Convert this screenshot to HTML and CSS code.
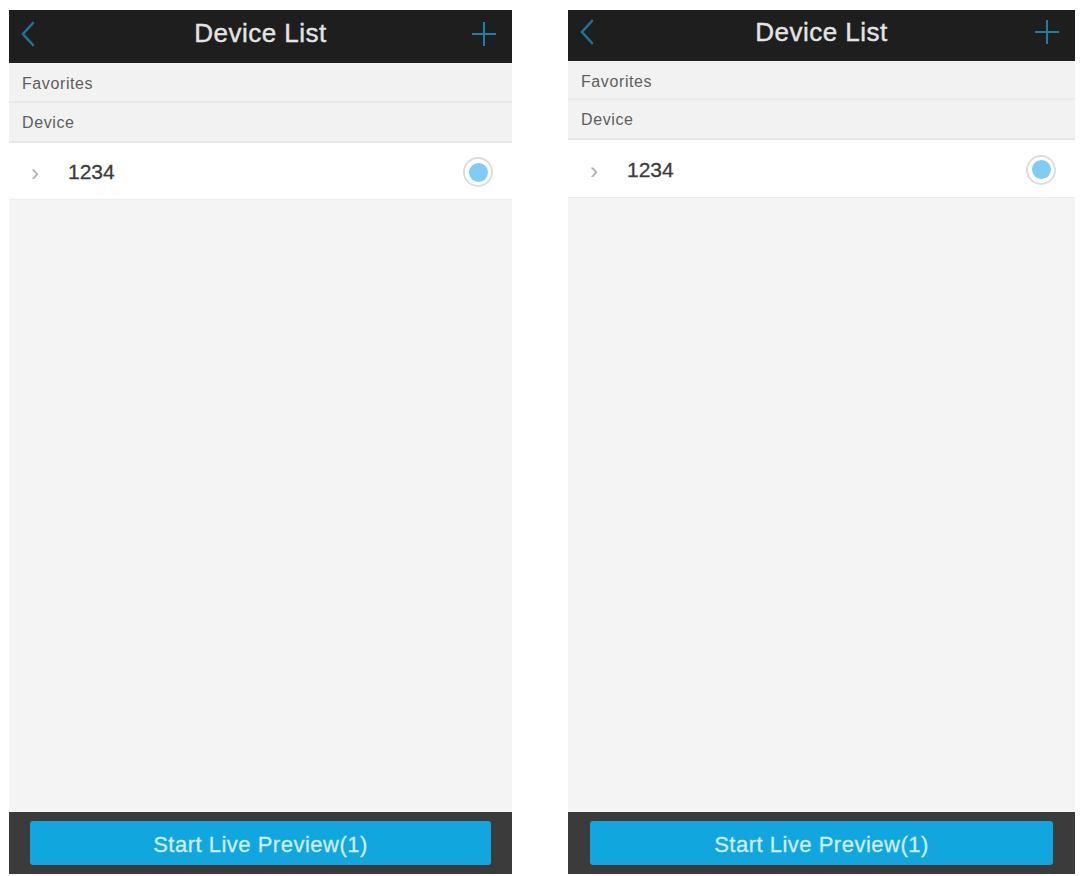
FILE: index.html
```html
<!DOCTYPE html>
<html>
<head>
    <title>Device List</title>
    <link rel="stylesheet" href="styles.css">
</head>
<body>
    <div class="pantallas">
        <div class="telefono telefono-izq">
            <div class="cabecera">
                <svg class="icono-atras" width="16" height="26" viewBox="0 0 16 26"><path d="M13 2 L3 13 L13 24" fill="none" stroke="#1c7496" stroke-width="2.6" stroke-linecap="round"/></svg>
                <h1>Device List</h1>
                <svg class="icono-mas" width="26" height="26" viewBox="0 0 26 26"><path d="M13 1 V25 M1 13 H25" stroke="#1d7fa6" stroke-width="2"/></svg>
            </div>
            <div class="seccion seccion-fav">Favorites</div>
            <div class="seccion seccion-disp">Device</div>
            <div class="dispositivo">
                <span class="flecha">&#8250;</span>
                <span class="nombre">1234</span>
                <span class="radio"><span class="punto"></span></span>
            </div>
            <div class="vacio"></div>
            <div class="pie">
                <button>Start Live Preview(1)</button>
            </div>
        </div>

        <div class="telefono telefono-der">
            <div class="cabecera">
                <svg class="icono-atras" width="16" height="26" viewBox="0 0 16 26"><path d="M13 2 L3 13 L13 24" fill="none" stroke="#1c7496" stroke-width="2.6" stroke-linecap="round"/></svg>
                <h1>Device List</h1>
                <svg class="icono-mas" width="26" height="26" viewBox="0 0 26 26"><path d="M13 1 V25 M1 13 H25" stroke="#1d7fa6" stroke-width="2"/></svg>
            </div>
            <div class="seccion seccion-fav">Favorites</div>
            <div class="seccion seccion-disp">Device</div>
            <div class="dispositivo">
                <span class="flecha">&#8250;</span>
                <span class="nombre">1234</span>
                <span class="radio"><span class="punto"></span></span>
            </div>
            <div class="vacio"></div>
            <div class="pie">
                <button>Start Live Preview(1)</button>
            </div>
        </div>
    </div>
</body>
</html>
```

FILE: styles.css
```css
body {
    margin: 0;
    background: #ffffff;
    font-family: "Liberation Sans", Arial, sans-serif;
}
.pantallas {
    display: flex;
    gap: 56px;
    padding: 10px 0 0 9px;
}
.telefono {
    display: flex;
    flex-direction: column;
    height: 864px;
    background: #f4f4f4;
}
.telefono-izq {
    width: 503px;
}
.telefono-der {
    width: 507px;
}
.cabecera {
    height: 53px;
    box-sizing: border-box;
    background: #1e1e1e;
    display: flex;
    align-items: center;
    justify-content: space-between;
    padding: 0 15px 6px 11px;
}
.telefono-der .cabecera {
    height: 51px;
    padding-bottom: 7px;
}
.cabecera h1 {
    margin: 0;
    font-size: 26px;
    font-weight: normal;
    letter-spacing: 0.5px;
    color: #e4e4e4;
    padding-left: 14px;
    -webkit-text-stroke: 0.4px #e4e4e4;
}
.seccion {
    background: #f2f2f2;
    color: #5e5e5e;
    font-size: 16px;
    letter-spacing: 0.6px;
    padding-left: 13px;
    display: flex;
    align-items: center;
    box-sizing: border-box;
}
.seccion-fav {
    height: 40px;
    padding-top: 3px;
    border-bottom: 2px solid #e9e9e9;
}
.seccion-disp {
    height: 40px;
    padding-top: 2px;
    border-bottom: 2px solid #e6e6e6;
}
.telefono-der .seccion-fav {
    padding-top: 4px;
    height: 39px;
}
.telefono-der .seccion-disp {
    height: 40px;
}
.dispositivo {
    height: 57px;
    background: #ffffff;
    display: flex;
    align-items: center;
    padding: 2px 19px 0 22px;
    box-sizing: border-box;
    border-bottom: 1px solid #ececec;
}
.telefono-der .dispositivo {
    height: 58px;
    padding-right: 19px;
}
.flecha {
    color: #b0b0b0;
    font-size: 24px;
    width: 37px;
    padding-top: 2px;
}
.nombre {
    font-size: 21px;
    color: #3c3c3c;
    flex: 1;
    -webkit-text-stroke: 0.3px #3c3c3c;
}
.radio {
    width: 30px;
    height: 30px;
    border-radius: 50%;
    border: 2px solid #dddddd;
    background: #ffffff;
    display: flex;
    align-items: center;
    justify-content: center;
    box-sizing: border-box;
}
.punto {
    width: 19px;
    height: 19px;
    border-radius: 50%;
    background: #7fcdf4;
}
.vacio {
    flex: 1;
}
.pie {
    height: 62px;
    background: #3b3b3b;
    display: flex;
    align-items: center;
    padding: 0 21px;
}
.telefono-der .pie {
    padding: 0 22px;
}
.pie button {
    width: 100%;
    height: 44px;
    border: none;
    border-radius: 3px;
    background: #11a7de;
    color: #cdeefb;
    font-family: "Liberation Sans", Arial, sans-serif;
    font-size: 22px;
    letter-spacing: 0.5px;
    padding-top: 5px;
    -webkit-text-stroke: 0.3px #cdeefb;
}
```
